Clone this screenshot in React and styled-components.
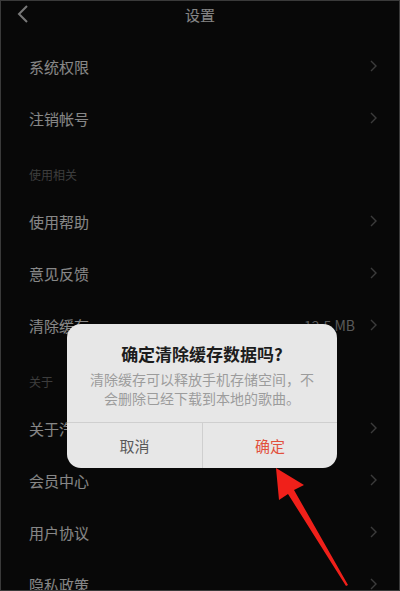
import React from 'react';
import styled, { createGlobalStyle } from 'styled-components';

const Global = createGlobalStyle`
  html, body {
    margin: 0;
    padding: 0;
    background: #080808;
  }
  body {
    font-family: "Noto Sans CJK SC", "Noto Sans", sans-serif;
  }
`;

const Screen = styled.div`
  position: relative;
  width: 400px;
  height: 591px;
  box-sizing: border-box;
  overflow: hidden;
  background: #0f0f0f;
  border: 1px solid #3a3a3a;
`;

const Header = styled.div`
  height: 26px;
  display: flex;
  align-items: center;
  justify-content: center;
  position: relative;
  color: #e6e6e6;
  font-size: 15px;
`;

const Back = styled.svg`
  position: absolute;
  left: 15px;
  top: 4px;
`;

const List = styled.div`
  padding-top: 13px;
  display: flex;
  flex-direction: column;
`;

const Row = styled.div`
  height: 52px;
  display: flex;
  align-items: center;
  justify-content: space-between;
  padding: 0 22px 0 28px;
  color: #e8e8e8;
  font-size: 15px;
`;

const Section = styled.div`
  height: 51px;
  box-sizing: border-box;
  display: flex;
  align-items: flex-end;
  padding: 0 0 12px 28px;
  color: #6a6a6a;
  font-size: 12px;
`;

const Right = styled.div`
  display: flex;
  align-items: center;
  gap: 15px;
  color: #9a9a9a;
  font-size: 14px;
`;

const Overlay = styled.div`
  position: absolute;
  inset: 0;
  background: rgba(0, 0, 0, 0.42);
`;

const Dialog = styled.div`
  position: absolute;
  left: 66px;
  top: 323px;
  width: 270px;
  border-radius: 14px;
  background: #e7e7e7;
  overflow: hidden;
  display: flex;
  flex-direction: column;
`;

const Title = styled.div`
  padding-top: 19px;
  text-align: center;
  font-size: 17px;
  font-weight: 700;
  color: #1c1c1c;
  line-height: 22px;
`;

const Body = styled.div`
  padding: 5px 18px 14px;
  text-align: center;
  font-size: 14px;
  line-height: 19px;
  color: #9c9c9c;
`;

const Buttons = styled.div`
  display: grid;
  grid-template-columns: 1fr 1fr;
  border-top: 1px solid #cfcfcf;
`;

const Btn = styled.div`
  height: 45px;
  display: flex;
  align-items: center;
  justify-content: center;
  font-size: 15px;
  color: ${(p) => (p.$danger ? '#e2503d' : '#5a5a5a')};
  & + & {
    border-left: 1px solid #cfcfcf;
  }
`;

const Arrow = styled.svg`
  position: absolute;
  left: 0;
  top: 0;
  pointer-events: none;
`;

const Chevron = () => (
  <svg width="7" height="12" viewBox="0 0 7 12">
    <path d="M1 1l5 5-5 5" fill="none" stroke="#666" strokeWidth="1.4" />
  </svg>
);

const items = [
  { label: '系统权限' },
  { label: '注销帐号' },
  { section: '使用相关' },
  { label: '使用帮助' },
  { label: '意见反馈' },
  { label: '清除缓存', value: '12.5 MB' },
  { section: '关于' },
  { label: '关于汽水音乐' },
  { label: '会员中心' },
  { label: '用户协议' },
  { label: '隐私政策' },
];

export default function App() {
  return (
    <Screen>
      <Global />
      <Header>
        <Back width="14" height="18" viewBox="0 0 14 18">
          <path d="M11 1L3 9l8 8" fill="none" stroke="#cfcfcf" strokeWidth="2" />
        </Back>
        设置
      </Header>
      <List>
        {items.map((it, i) =>
          it.section ? (
            <Section key={i}>{it.section}</Section>
          ) : (
            <Row key={i}>
              <span>{it.label}</span>
              <Right>
                {it.value && <span>{it.value}</span>}
                <Chevron />
              </Right>
            </Row>
          )
        )}
      </List>
      <Overlay />
      <Dialog>
        <Title>确定清除缓存数据吗?</Title>
        <Body>清除缓存可以释放手机存储空间，不会删除已经下载到本地的歌曲。</Body>
        <Buttons>
          <Btn>取消</Btn>
          <Btn $danger>确定</Btn>
        </Buttons>
      </Dialog>
      <Arrow width="400" height="591" viewBox="0 0 400 591">
        <polygon
          points="275,467 303,484 293,489 347,584 345,585 287,493 278,499"
          fill="#f0201a"
        />
      </Arrow>
    </Screen>
  );
}
